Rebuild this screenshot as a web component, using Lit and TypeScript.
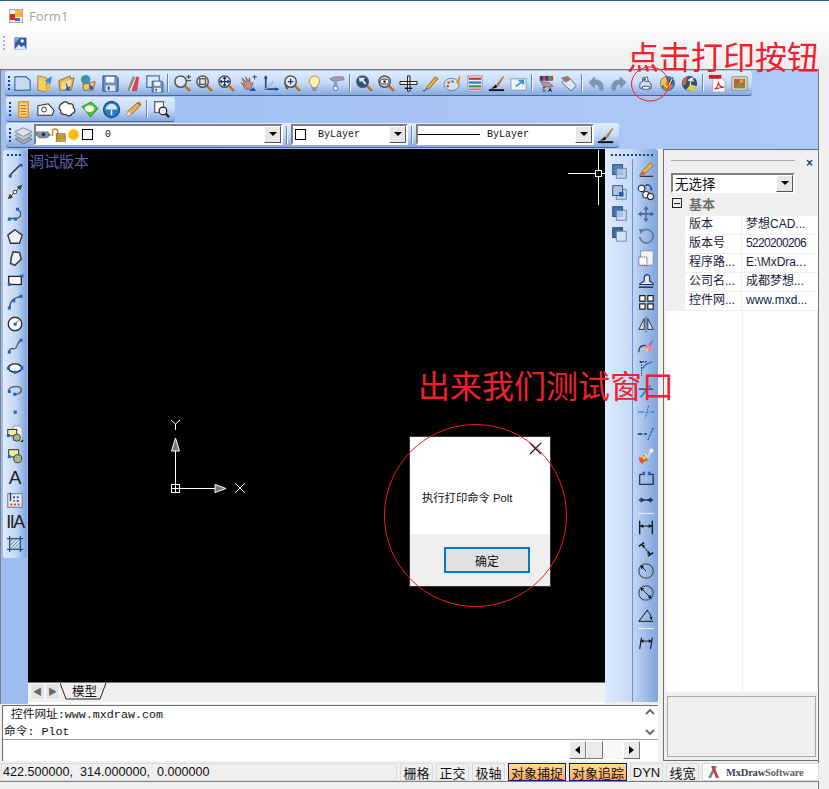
import { LitElement, html, css, svg, SVGTemplateResult } from "lit";
import { customElement } from "lit/decorators.js";

const B = "#1e66c8";
const node = (x: number, y: number) => svg`<rect x=${x} y=${y} width="3.4" height="3.4" fill=${B}/>`;
const mag = (inner: SVGTemplateResult | string = "", fill = "#dfe8f2") => svg`
  <path d="M12.5 12.5L18 18" stroke="#b8741c" stroke-width="2.6"/>
  <circle cx="8" cy="8" r="6" fill=${fill} stroke="#555" stroke-width="1.6"/>${inner}`;
const floppy = (x = 0, y = 0, s = 1) => svg`<g transform="translate(${x} ${y}) scale(${s})">
  <path d="M2 2h14l2 2v14H2z" fill="#6d8fbd" stroke="#2c4f80"/><rect x="5" y="3" width="9" height="6" fill="#f2f5f9"/>
  <rect x="5" y="12" width="10" height="6" fill="#dfe6f0"/><rect x="7" y="13" width="2" height="4" fill="#2c4f80"/></g>`;
const stack = (a: string, b: string) => svg`<rect x="3" y="3" width="11" height="11" fill=${a} stroke="#26456f"/>
  <rect x="7" y="7" width="11" height="11" fill=${b} stroke="#5a7ba8"/>`;

const I: Record<string, SVGTemplateResult> = {
  image: svg`<rect x="3" y="3" width="14" height="14" fill="#2f55a8"/><path d="M3 17l5-6 3 3 3-2 3 5z" fill="#dfe8fa"/><circle cx="12" cy="7" r="2" fill="#fff"/><path d="M3 3h7L3 10z" fill="#7fa3df"/>`,
  new: svg`<path d="M2 3h12l4 4v10H2z" fill="#dfeaf7" stroke="#2a5f96" stroke-width="1.2"/><path d="M3 4h10l4 4v8H3z" fill="#c6dbf2"/>`,
  folderArrow: svg`<path d="M3 2l9 2v15l-9-2z" fill="#f3cf68" stroke="#a97f22"/><path d="M12 4l4 1v11l-4 3z" fill="#e9b94a"/><path d="M18 2l-8 5 3 1-2 4 3-3 2 2z" fill="#3a8ed8"/>`,
  open: svg`<path d="M2 7l12-5v3l4-1-3 13H3z" fill="#e6bb58" stroke="#8d6b23"/><path d="M5 9l10-3-2 10H4z" fill="#f7dc8f"/><path d="M9 8l3 6 2-1-1 5-5-2 2-1z" fill="#1d5fb8"/>`,
  globeFolder: svg`<circle cx="7" cy="6" r="5" fill="#3f8fc8"/><path d="M4 3l4 1-2 4-3-1z" fill="#3ca34a"/><path d="M4 11l13-3-2 9H5z" fill="#ecc96f" stroke="#8d6b23"/><path d="M10 9l3 4 2-1-1 5-4-2 1-1z" fill="#1d5fb8"/>`,
  save: floppy(0, 0),
  cad: svg`<path d="M3 18L9 3h7v15z" fill="#d9dde6"/><path d="M4 18L10 3h3L7 18z" fill="#8b8f99"/><path d="M9 18l5-15h3l-2 15z" fill="#cf4b4b"/>`,
  saveAll: svg`<rect x="2" y="2" width="13" height="12" fill="#dfe8f4" stroke="#2c4f80"/>${floppy(6, 6, 0.72)}`,
  zoomPM: mag(svg`<path d="M14 3h5M16.5 .8v4.4M14 7h5" stroke="#333" stroke-width="1"/>`),
  zoomWin: mag(svg`<rect x="5" y="5" width="6" height="6" fill="none" stroke="#555" stroke-width="1.4"/>`),
  zoomPan: mag(svg`<path d="M8 3.5v9M3.5 8h9M6.5 5L8 3.5 9.5 5M6.5 11L8 12.5 9.5 11M5 6.5L3.5 8 5 9.5M11 6.5L12.5 8 11 9.5" stroke="#16325f" fill="none" stroke-width="1.2"/>`),
  hand: svg`<path d="M3 4l5 5-1-6 3 5 1-4 1 6 3-1-3 7H7L2 9l4 3z" fill="#c08f8a" stroke="#7e5a58" stroke-width=".8"/><path d="M14 3h5M16.5 .8v5" stroke="#1f4f90"/><path d="M11 18l4-4 3 4z" fill="#1f4f90"/>`,
  axes: svg`<path d="M5 2v14h13" fill="none" stroke="#1e4d8c" stroke-width="1.8"/><path d="M5 16l8-8" stroke="#9fb2cc" stroke-width="1.6"/><path d="M3 5l2-4 2 4zM15 14l4 2-4 2z" fill="#1e4d8c"/>`,
  zoomRot: svg`<path d="M5 4a8 8 0 0 0 0 12" fill="none" stroke="#456" stroke-width="1.6"/>${mag(svg`<path d="M8 5v6M5 8h6" stroke="#16325f" stroke-width="1.3"/>`, "#e8eef6")}`,
  bulb: svg`<path d="M10 2a5.5 5.5 0 0 1 3 10v2H7v-2a5.5 5.5 0 0 1 3-10z" fill="#fbf2a8" stroke="#a3945f"/><rect x="7.5" y="14" width="5" height="4" fill="#8a97a8"/>`,
  tool: svg`<path d="M3 5l5-2h9l1 3-7 1H5z" fill="#ba9aa0" stroke="#6d7b92" stroke-width=".8"/><rect x="7" y="7" width="4" height="6" fill="#8fa6c2"/><circle cx="9" cy="15" r="2.4" fill="#e9eef5" stroke="#5c6f8a"/>`,
  zoomDark: mag(svg`<path d="M4 4h7l-2 2 3 4-2 1-3-4-2 2z" fill="#dfe8f2"/>`, "#1f4f90"),
  zoomEye: mag(svg`<ellipse cx="8" cy="8" rx="4.5" ry="2.6" fill="#fff" stroke="#333"/><circle cx="8" cy="8" r="1.5" fill="#333"/>`, "#cfd3da"),
  plane: svg`<path d="M1 8h18v3H1zM9 2h2.500v16H9z" fill="#fff" stroke="#111"/><path d="M6 15h8" stroke="#111" stroke-width="1.4"/>`,
  penCurve: svg`<path d="M2 17c1 2 3 0 4-2" fill="none" stroke="#222"/><path d="M6 14l9-11 3 2-10 11z" fill="#efb13a" stroke="#8d6418"/><path d="M6 18h12" stroke="#a8b0ba"/>`,
  palette: svg`<ellipse cx="9" cy="11" rx="8" ry="6.5" fill="#d7dee8" stroke="#6e7f96"/><circle cx="6" cy="9" r="1.3" fill="#d04a3a"/><circle cx="10" cy="8" r="1.3" fill="#3a9a4c"/><circle cx="5" cy="13" r="1.3" fill="#3b6fc6"/><path d="M14 9l3-7 1.5 1-2 8z" fill="#e28a2b"/>`,
  colorBars: svg`<rect x="3" y="2" width="15" height="16" fill="#eef2f7" stroke="#8a97a8"/><path d="M4 5h13" stroke="#d6342f" stroke-width="2.4"/><path d="M4 9h13" stroke="#2f7fd6" stroke-width="2.4"/><path d="M4 13h13" stroke="#2fa14a" stroke-width="2.4"/><path d="M4 16h13" stroke="#d64f9a" stroke-width="1.5"/>`,
  brush: svg`<path d="M2 17h16" stroke="#111" stroke-width="2"/><path d="M4 15c3-1 4-3 5-4l2 2c-1 2-4 3-7 2z" fill="#111"/><path d="M10 11l7-9 1 1-6 10z" fill="#b5763a"/>`,
  arrowBox: svg`<rect x="2" y="5" width="16" height="12" fill="#eef3f9" stroke="#8b98aa"/><path d="M7 13l7-5M10 7h5v4" fill="none" stroke="#2f8fd8" stroke-width="1.8"/>`,
  colors: svg`<path d="M3 2h14v5H3z" fill="#d33"/><path d="M3 2h3v5H3zM9 2h3v5H9z" fill="#33a"/><path d="M12 2h3v5h-3z" fill="#3a3"/><path d="M4 8l9 1 4 4-5 1-6-2z" fill="#b9928a" stroke="#6c5a5a" stroke-width=".7"/><path d="M14 14l2 5h-1l-.4-1h-2l-.4 1h-1z" fill="#333"/><path d="M6 14h3M6 16h2M6 18h3" stroke="#333"/>`,
  tag: svg`<path d="M3 9l6-6 2 1 7 8-5 6-8-7z" fill="#dce5f0" stroke="#52688a"/><path d="M2 4l7-2 3 4-5 3z" fill="#96766f"/>`,
  undo: svg`<path d="M8 3L2 9l6 6v-4c3 0 5 1 5 6h4C18 9 14 6 8 6z" fill="#7f95b8" stroke="#7388ab" stroke-width=".5"/>`,
  redo: svg`<path d="M12 3l6 6-6 6v-4c-3 0-5 1-5 6H3C2 9 6 6 12 6z" fill="#7f95b8" stroke="#7388ab" stroke-width=".5"/>`,
  print: svg`<path d="M7 4l5-1 1 5H7z" fill="#fff" stroke="#455b7f"/><path d="M4 10l4-3 6 1 2 3v4H4z" fill="#d4dcea" stroke="#455b7f"/><path d="M7 13h7v3H7z" fill="#fff" stroke="#455b7f"/><circle cx="9" cy="5.500" r="1.300" fill="#455b7f"/>`,
  orb1: svg`<circle cx="10" cy="10" r="8" fill="#3d76b6"/><path d="M3 13a8 8 0 0 1 5-10l2 6z" fill="#e6c84a"/><path d="M5 16l4-8 7 5-5 4z" fill="#d97a3a"/><path d="M10 9l6-6-1 7z" fill="#14345f"/><path d="M6 11l4 3 5-9" fill="none" stroke="#f4e35a" stroke-width="1.4"/>`,
  orb2: svg`<circle cx="10" cy="10" r="8" fill="#284f8e"/><path d="M3 12a8 8 0 0 1 5-10l-2 9z" fill="#d9643a"/><path d="M6 17l5-6 7 2-4 5z" fill="#e6c84a"/><path d="M8 7c2-3 5-4 8-3l-3 1 2 3z" fill="#e9f0fa"/><path d="M11 5v8" stroke="#f4e35a" stroke-width="1.4"/>`,
  pdf: svg`<path d="M5 4h9l4 4v11H5z" fill="#fff" stroke="#a9a9a9"/><rect x="1" y="1" width="13" height="4" fill="#c8201c"/><path d="M7 16c3-2 4-5 4-8 0 4 2 6 6 6-4 0-7 1-10 2z" fill="none" stroke="#d62a24" stroke-width="1.2"/>`,
  picture: svg`<rect x="2" y="3" width="16" height="14" fill="#e9e3d6" stroke="#8a8a7a"/><rect x="4" y="5" width="12" height="10" fill="#b5683a"/><path d="M4 15l6-6 6 6z" fill="#79914c"/><circle cx="12" cy="7.5" r="2" fill="#f0a23a"/>`,
  list: svg`<rect x="5" y="2" width="10" height="16" fill="#fbd98a" stroke="#e08a12" stroke-width="1.4"/><path d="M7 6h6M7 9h6M7 12h6M7 15h6" stroke="#b5640c"/>`,
  polyPage: svg`<path d="M2 6l11-2 6 7-2 5H2z" fill="#fafbfc" stroke="#333" stroke-width="1.1"/><circle cx="8.5" cy="10" r="2.6" fill="none" stroke="#333"/>`,
  cloud: svg`<path d="M5 3c2-2 5-1 6 1 3-1 6 1 5 4 3 2 2 6-1 6-1 3-5 4-7 1-3 1-6-1-5-4-3-2-2-6 2-8z" fill="#fff" stroke="#333" stroke-width="1.3"/>`,
  bubble: svg`<path d="M2 7l10-5 7 7-8 9-2-3z" fill="#4fbf3f" stroke="#2d8a25"/><ellipse cx="10" cy="9" rx="5" ry="3.6" fill="#f2fbe8"/>`,
  dome: svg`<circle cx="10" cy="10" r="8.5" fill="#2d7bbd" stroke="#164f80" stroke-width="1.2"/><path d="M4 10a6 6 0 0 1 12 0z" fill="#cfe6f5"/><path d="M10 10v6" stroke="#e9f3fb" stroke-width="1.6"/>`,
  pencil: svg`<path d="M3 17l1-5 10-9 3 3-9 9z" fill="#e9b24b" stroke="#7f6a40"/><path d="M3 17l1-5 4 3z" fill="#f7e2bd"/><path d="M14 3l3 3 1.5-1.5-3-3z" fill="#c55c3f"/>`,
  zoomRect: svg`<path d="M3 14V2h10" fill="none" stroke="#555" stroke-width="1.2"/><rect x="3" y="2" width="9" height="11" fill="#fff" stroke="#555"/><path d="M14 14l4 4" stroke="#222" stroke-width="2.4"/><circle cx="11.5" cy="11.5" r="4" fill="#e8eef6" stroke="#222" stroke-width="1.3"/>`,
  layers: svg`<path d="M10 10l9 4-9 5-9-5z" fill="#9faab8" stroke="#717b88"/><path d="M10 6l9 4-9 5-9-5z" fill="#c0c8d3" stroke="#808a98"/><path d="M10 2l9 4-9 5-9-5z" fill="#dde2e9" stroke="#808a98"/>`,
  eye: svg`<path d="M0 6h16l4 5-6 4H4L0 11z" fill="#6a7f92"/><ellipse cx="9" cy="10" rx="7" ry="3.6" fill="#8a9cac"/><circle cx="10" cy="10" r="2.6" fill="#253a4e"/>`,
  lock: svg`<path d="M2 12V6a3.5 3.5 0 0 1 7 0v3" fill="none" stroke="#c28a26" stroke-width="2"/><rect x="7" y="9" width="12" height="10" fill="#dba93c" stroke="#8d6418"/><path d="M7 12h12M7 15h12" stroke="#9a7220"/>`,
  sun: svg`<circle cx="10" cy="10" r="7" fill="#fbb80c" stroke="#fbe05a" stroke-width="2" stroke-dasharray="2 1"/>`,
  line: svg`${node(15, 3)}${node(3, 15)}<path d="M5 15L15 5" stroke="#222" stroke-width="1.4"/>`,
  dim: svg`<path d="M4 16L16 4" stroke="#333" stroke-width="1.1"/><path d="M2 18l2-6 4 4zM18 2l-6 2 4 4z" fill="#444"/><circle cx="10" cy="10" r="2" fill="#fff" stroke="#333"/>`,
  polyArc: svg`<path d="M3 15h8c6 0 7-8 2-10" fill="none" stroke="#555" stroke-width="1.4"/>${node(2, 14)}${node(9, 14)}${node(11, 3)}`,
  pentagon: svg`<path d="M10 3l8 6-3 9H5L2 9z" fill="#f0f4f9" stroke="#333" stroke-width="1.5"/>`,
  poly: svg`<path d="M8 3l7 1 2 7-7 7-5-2 1-7z" fill="#f0f4f9" stroke="#444" stroke-width="1.8"/>`,
  rect: svg`<rect x="3" y="6" width="14" height="9" fill="#fff" stroke="#222" stroke-width="1.4"/>${node(2, 13)}${node(16, 4)}`,
  arc: svg`<path d="M4 17C4 9 9 5 16 4" fill="none" stroke="#555" stroke-width="1.6"/>${node(2, 15)}${node(15, 2)}${node(7, 7)}`,
  circle: svg`<circle cx="10" cy="10" r="7.5" fill="#fff" stroke="#333" stroke-width="1.5"/><path d="M10 10l4-4" stroke="#1e66c8"/>${node(8.5, 8.5)}`,
  spline: svg`<path d="M3 16c3-7 5 0 8-4s2-8 6-8" fill="none" stroke="#555" stroke-width="1.5"/>${node(2, 15)}${node(15, 2)}`,
  ellipse: svg`<ellipse cx="10" cy="10" rx="7.5" ry="4.5" fill="#fff" stroke="#222" stroke-width="1.4"/>${node(1, 8.5)}${node(16, 8.5)}${node(8.5, 13)}`,
  ellArc: svg`<path d="M3 12C1 6 15 4 17 9c1 4-4 6-8 6" fill="none" stroke="#666" stroke-width="1.6"/>${node(2, 10)}${node(8, 13)}`,
  point: svg`<rect x="8.5" y="8.5" width="3.500" height="3.500" fill=${B}/>`,
  insert: svg`<path d="M8 1h7l3 3v13H8z" fill="#eef2f7" stroke="#8a97a8"/><rect x="2" y="5" width="10" height="7" fill="#f0ee9a" stroke="#222"/><circle cx="12" cy="14" r="4" fill="#a5b68b" stroke="#333"/>${node(1, 10)}<path d="M16 19l3-3v3z" fill="#111"/>`,
  block: svg`<rect x="3" y="3" width="11" height="8" fill="#f0ee9a" stroke="#222"/><circle cx="13" cy="13" r="4.5" fill="#a5b68b" stroke="#333"/>${node(2, 9)}`,
  hatchTbl: svg`<rect x="2" y="3" width="16" height="15" fill="#e4e8ee" stroke="#5a7290"/><rect x="8" y="6" width="2" height="2" fill="#1f3a8a"/><rect x="12" y="6" width="2" height="2" fill="#1f3a8a"/><rect x="8" y="10" width="2" height="2" fill="#2fa14a"/><rect x="12" y="10" width="2" height="2" fill="#1f3a8a"/><rect x="5" y="14" width="2" height="2" fill="#d6342f"/><rect x="9" y="14" width="2" height="2" fill="#d6342f"/><rect x="13" y="14" width="2" height="2" fill="#d6342f"/><path d="M5 2v9" stroke="#333" stroke-width="1.5"/>`,
  hatch: svg`<rect x="4" y="4" width="12" height="12" fill="#cfe0f2"/><path d="M4 8l4-4M4 12l8-8M4 16L16 4M8 16l8-8M12 16l4-4" stroke="#4a5a70" stroke-width=".8"/><path d="M1 4h18M1 16h18M4 1v18M16 1v18" stroke="#23568f" stroke-width="1.4"/>`,
  s1: stack("#5a84b8", "rgba(190,210,235,.75)"),
  s2: svg`<rect x="7" y="7" width="11" height="11" fill="#c8d9ee" stroke="#5a7ba8"/><rect x="3" y="3" width="11" height="11" fill="#a9c4e4" stroke="#26456f"/><rect x="10" y="10" width="5" height="5" fill="#2f5b96"/>`,
  s3: stack("#4a74a8", "rgba(205,222,242,.75)"),
  s4: svg`<rect x="3" y="3" width="11" height="11" fill="#3f6ba3" stroke="#26456f"/><rect x="7" y="7" width="11" height="11" fill="#d2e1f3" stroke="#6a8ab4"/>`,
  eraser: svg`<path d="M3 17h15" stroke="#222" stroke-width="1.2"/><path d="M3 16l3-5 9-9 3 3-9 9z" fill="#e9b24b" stroke="#7f6a40"/><path d="M3 16l3-5 4 3z" fill="#d85a4a"/>`,
  copy: svg`<circle cx="5" cy="6" r="3.6" fill="#fff" stroke="#333" stroke-width="1.3"/><circle cx="10" cy="13" r="3.6" fill="#fff" stroke="#333" stroke-width="1.3"/><circle cx="15" cy="15" r="3.4" fill="#fff" stroke="#333" stroke-width="1.3"/><path d="M9 3c3-2 6-1 7 3" fill="none" stroke="#1e4d8c" stroke-width="1.5"/><path d="M14 6h4l-2 3z" fill="#1e4d8c"/>`,
  move: svg`<path d="M10 2v16M2 10h16" stroke="#4f76a8" stroke-width="2"/><path d="M7 5l3-4 3 4zM7 15l3 4 3-4zM5 7l-4 3 4 3zM15 7l4 3-4 3z" fill="#426a9e"/>`,
  rotate: svg`<path d="M5 5a7.5 7.5 0 1 1-2 6" fill="none" stroke="#5f7ea6" stroke-width="2"/><path d="M2 2l6 1-4 5z" fill="#5f7ea6"/>`,
  dotRect: svg`<rect x="4" y="2" width="14" height="16" fill="#eef3f9" stroke="#7b90ab"/><rect x="2" y="9" width="9" height="9" fill="#fff" stroke="#222" stroke-dasharray="1 1"/>`,
  stamp: svg`<path d="M3 15c0-3 4-2 5-4 0-3-1-6 3-7 4 0 3 4 3 7 1 2 4 1 4 4z" fill="#dfe8f4" stroke="#1a3350" stroke-width="1.3"/><path d="M2 18h16" stroke="#1a3350" stroke-width="1.6"/>`,
  array: svg`<path d="M3 3h6v6H3zM12 3h6v6h-6zM3 12h6v6H3zM12 12h6v6h-6z" fill="#fff" stroke="#222" stroke-width="1.3"/>`,
  mirror: svg`<path d="M10 1v18" stroke="#1e66c8"/><path d="M8 4v12H2zM12 4v12h6z" fill="#d9e1ec" stroke="#222"/>`,
  paint: svg`<path d="M2 17c0-8 6-9 10-6" fill="none" stroke="#333" stroke-width="1.3"/><circle cx="13" cy="12" r="4" fill="#e77fc0"/><circle cx="11" cy="14" r="2" fill="#f0d24a"/><path d="M13 8l4-5 1 1-3 6z" fill="#8a6ab0"/>`,
  trim: svg`<path d="M3 3h9" stroke="#111" stroke-dasharray="1.5 1.5" stroke-width="1.5"/><path d="M5 3v16" stroke="#111" stroke-dasharray="1.5 1.5"/><path d="M5 11l5-5 7-3" fill="none" stroke="#1e7bd8" stroke-width="1.6"/>`,
  extend: svg`<path d="M2 9h16" stroke="#111" stroke-width="1.1"/><path d="M4 18l5-6 6-7" fill="none" stroke="#1e7bd8" stroke-width="1.8"/>`,
  brk1: svg`<path d="M1 10h7M11 10h2M15 10h4" stroke="#1e66c8" stroke-width="1.3"/><path d="M13 3l-4 14" stroke="#1e66c8" stroke-dasharray="2 1.5" stroke-width="1.3"/>`,
  brk2: svg`<path d="M1 10h5M8 10h3" stroke="#1a3350" stroke-width="1.5"/><path d="M18 3l-6 14" stroke="#1e66c8" stroke-dasharray="3 1" stroke-width="1.4"/>`,
  explode: svg`<path d="M3 14l5-6 4 3 5-8" stroke="#c9d5e3" stroke-width="2.5" fill="none"/><path d="M2 11l4 1 1-4 3 3 2 4-4 1-2 3-3-3z" fill="#e25224"/><circle cx="8" cy="12" r="2" fill="#f5d03a"/><rect x="14" y="2" width="4" height="4" fill="#eef1f5"/>`,
  bracket: svg`<path d="M3 6v11h15V6h-5M8 6H3" fill="none" stroke="#28344a" stroke-width="1.4"/><rect x="6" y="3" width="3" height="4" fill="#1e66c8"/><rect x="12" y="3" width="3" height="4" fill="#1e66c8"/>`,
  join: svg`<path d="M2 10h16" stroke="#1a3350" stroke-width="1.5"/><path d="M4 7l5 3-5 3zM16 7l-5 3 5 3z" fill="#17365f"/>`,
  dimLin: svg`<path d="M3 3v15M17 3v15" stroke="#111" stroke-width="1.4"/><path d="M3 9h14" stroke="#111"/><path d="M3 9l4-2v4zM17 9l-4-2v4z" fill="#111"/>`,
  dimAli: svg`<path d="M2 7l6-4M12 18l6-4" stroke="#111" stroke-width="1.6"/><path d="M5 5l10 11" stroke="#111"/><path d="M5 5l4 1-2 3zM15 16l-4-1 2-3z" fill="#111"/>`,
  radius: svg`<circle cx="10" cy="10" r="8" fill="none" stroke="#555" stroke-width="1.4"/><path d="M10 10L4 4" stroke="#111"/><path d="M4 4l4 1-3 3z" fill="#111"/>`,
  diam: svg`<circle cx="10" cy="10" r="8" fill="none" stroke="#555" stroke-width="1.4"/><path d="M4 4l12 12" stroke="#111"/><path d="M4 4l4 1-3 3zM16 16l-4-1 3-3z" fill="#111"/>`,
  angle: svg`<path d="M2 17h16M2 17L12 4" stroke="#111" stroke-width="1.1"/><path d="M11 5c3 2 5 6 5 10" fill="none" stroke="#111"/><path d="M16 16l-2-4 3 .5z" fill="#111"/>`,
  dimCont: svg`<path d="M5 5L3 18M17 5l-2 13" stroke="#111" stroke-width="1.2"/><path d="M4 9h12" stroke="#111"/><path d="M4 9l3-2v4zM16 9l-3-2v4z" fill="#111"/>`,
};

const icon = (n: string) => html`<svg class="ic" viewBox="0 0 20 20" aria-hidden="true">${I[n]}</svg>`;
const cell = (n: string) => (n === "|" ? html`<span class="sep"></span>` : html`<span class="cell">${icon(n)}</span>`);

const ROW1 = ["new", "folderArrow", "open", "globeFolder", "save", "cad", "saveAll", "|", "zoomPM", "zoomWin", "zoomPan", "hand", "axes", "zoomRot", "bulb", "tool", "|", "zoomDark", "zoomEye", "plane", "penCurve", "palette", "colorBars", "brush", "arrowBox", "|", "colors", "tag", "|", "undo", "redo", "|x", "print", "orb1", "orb2", "|", "pdf", "picture"];
const ROW2 = ["list", "polyPage", "cloud", "bubble", "dome", "pencil", "|", "zoomRect"];
const LEFT = ["line", "dim", "polyArc", "pentagon", "poly", "rect", "arc", "circle", "spline", "ellipse", "ellArc", "point", "insert", "block", "A", "hatchTbl", "IA", "hatch"];
const COL1 = ["s1", "s2", "s3", "s4"];
const COL2 = ["eraser", "copy", "move", "rotate", "dotRect", "stamp", "array", "mirror", "paint", "trim", "extend", "brk1", "brk2", "explode", "bracket", "join", "-", "dimLin", "dimAli", "radius", "diam", "angle", "-", "dimCont"];
const PROPS: [string, string][] = [["版本", "梦想CAD..."], ["版本号", "5220200206"], ["程序路...", "E:\\MxDra..."], ["公司名...", "成都梦想..."], ["控件网...", "www.mxd..."]];

@customElement("app-root")
export class AppRoot extends LitElement {
  static styles = css`
    :host { display: block; position: relative; width: 829px; height: 789px; overflow: hidden; background: #f0f0f0;
      font-family: "Liberation Sans", "Noto Sans CJK SC", sans-serif; font-size: 12px; color: #111; }
    .ic { width: 20px; height: 20px; display: block; }
    .title { height: 30px; border-top: 1px solid #2f5f7f; background: #fff; display: flex; align-items: center; gap: 6px; padding-left: 9px; color: #a2a2a2; font-size: 13px; font-family: "Open Sans", sans-serif; }
    .title svg { width: 14px; height: 14px; }
    .strip { height: 38px; box-sizing: border-box; padding: 4px 0 0 3px; background: linear-gradient(#fbfbfb, #ededed); display: flex; gap: 7px; align-items: flex-start; }
    .strip .ic { width: 17px; height: 17px; }
    .grip { width: 2px; height: 14px; margin-top: 1px; background: repeating-linear-gradient(#b4b4b4 0 2px, transparent 2px 4px); }
    .frame { width: 819px; height: 720px; box-sizing: border-box; border-top: 1px solid #767676; border-right: 1px solid #767676; display: flex; flex-direction: column; }
    .tbarea { height: 79px; background: linear-gradient(90deg, #9fbef1, #aecaf6); box-sizing: border-box; padding: 1px 0 0 4px; border-left: 1px solid #808080; display: flex; flex-direction: column; gap: 1px; }
    .bar { display: flex; align-items: center; height: 25px; box-sizing: border-box; align-self: flex-start; border-radius: 3px; border-bottom: 1px solid #46679a; padding-left: 2px;
      background: linear-gradient(#e0ecfc, #c6daf7 50%, #86a9df); }
    .bar.r1 { width: 747px; }
    .bar.r2 { width: 169px; margin-left: 1px; padding-left: 2px; }
    .bar.r3 { width: 613px; margin-left: 1px; }
    .dots { width: 2px; height: 14px; margin: 0 1px; flex: none; background: repeating-linear-gradient(#1f3f78 0 2px, transparent 2px 4px); }
    .cell { width: 22px; height: 22px; display: flex; align-items: center; justify-content: center; flex: none; }
    .cell .ic { width: 19px; height: 19px; }
    .sep { width: 1px; height: 18px; margin: 0 2px; background: #5f83bb; border-right: 1px solid #f0f6ff; flex: none; }
    .sep.wide { margin: 0 3px; }
    .gapx { width: 5px; flex: none; }
    .gap1 { width: 1px; flex: none; }
    .combo { height: 21px; background: #fff; box-sizing: border-box; border: 2px solid; border-color: #808080 #fff #fff #808080; display: flex; align-items: center; font-family: "Liberation Mono", monospace; font-size: 10px; flex: none; position: relative; margin-bottom: 2px; }
    .combo.layer { width: 249px; }
    .combo.color { width: 117px; }
    .combo.ltype { width: 178px; }
    .combo .ic { width: 15px; height: 15px; flex: none; }
    .combo .fill { flex: 1; min-width: 0; }
    .drop { width: 17px; height: 17px; flex: none; background: #e6e6e6; border: 1px solid; border-color: #fff #555 #555 #fff; box-sizing: border-box; display: flex; align-items: center; justify-content: center; }
    .drop i { border: 4px solid transparent; border-top: 4px solid #000; border-bottom: 0; }
    .swatch { width: 9px; height: 9px; border: 1px solid #000; flex: none; margin-left: 1px; }
    .lname { margin-left: 12px; }
    .lrule { width: 62px; border-top: 1px solid #000; margin: 0 7px 0 0; flex: none; }
    .lrule + .lname { margin-left: 0; }
    .body { display: flex; height: 612px; }
    .mainc { width: 663px; display: flex; flex-direction: column; flex: none; }
    .work { height: 555px; display: flex; flex: none; }
    .leftcol { width: 28px; background: #9dbdf1; box-sizing: border-box; padding-left: 2px; border-left: 1px solid #808080; flex: none; }
    .vbar { width: 24px; height: 408px; margin-top: 1px; border-radius: 3px; background: linear-gradient(90deg, #dfeafb, #c2d7f5 55%, #80a4dc); display: flex; flex-direction: column; align-items: center; }
    .vdots { width: 16px; height: 2px; margin: 4px 0 3px; background: repeating-linear-gradient(90deg, #1f3f78 0 2px, transparent 2px 4px); flex: none; }
    .vcell { width: 22px; height: 22px; display: flex; align-items: center; justify-content: center; font-size: 19px; color: #222; flex: none; white-space: nowrap; }
    .vcell.ia { font-size: 18px; letter-spacing: -1.5px; }
    .vcell .ic { width: 18px; height: 18px; }
    .canvasc { width: 577px; flex: none; display: flex; flex-direction: column; }
    .canvas { height: 534px; background: #000; color: #5b60ac; font: 15px "Noto Sans CJK SC", sans-serif; padding: 2px 0 0 1px; box-sizing: border-box; border-bottom: 1px solid #777; line-height: 20px; }
    .tabs { flex: 1; background: #efefef; border-bottom: 2px solid #fff; display: flex; align-items: flex-start; padding-left: 2px; }
    .nav { width: 13px; height: 15px; display: flex; align-items: center; justify-content: center; background: #e4e4e4; border: 1px solid #f7f7f7; color: #666; font-size: 9px; }
    .tab { display: flex; align-items: center; }
    .tab svg { width: 47px; height: 17px; margin-right: -47px; flex: none; }
    .tab span { margin-left: 12px; font-size: 12.5px; width: 38px; line-height: 16px; }
    .rtb { width: 53px; border-radius: 0 3px 3px 0; background: linear-gradient(90deg, #deeafc, #c6daf7 50%, #7ea2da); flex: none; display: flex; flex-direction: column; position: relative; box-sizing: border-box; border-bottom: 2px solid #eee; }
    .rtb .vdots { width: 42px; margin: 5px 0 3px 6px; }
    .cols { display: flex; }
    .col1 { width: 28px; display: flex; flex-direction: column; align-items: center; padding-top: 1px; box-sizing: border-box; border-right: 1px solid #6f93c8; height: 543px; }
    .col2 { width: 25px; display: flex; flex-direction: column; align-items: center; }
    .col2 .hs { width: 16px; height: 1px; background: #e9f1fd; margin: 2px 0; flex: none; }
    .col1 .vcell { height: 21px; }
    .cmd { flex: 1; margin: 1px 0 0 2px; width: 656px; background: #fff; box-sizing: border-box; border: 1px solid #6e6e6e; border-width: 1px 0 0 1px; display: flex; flex-direction: column; }
    .cmdtop { height: 33px; display: flex; border-bottom: 1px solid #a0a0a0; flex: none; }
    .cmdtext { flex: 1; font: 11.7px/16.5px "Liberation Mono", "Noto Sans CJK SC", monospace; padding: 1px 0 0 1px; white-space: pre; box-sizing: border-box; overflow: hidden; }
    .vs { width: 17px; display: flex; flex-direction: column; justify-content: space-between; align-items: center; padding: 2px 0 3px; background: #fff; }
    .chev { fill: none; stroke: #666; stroke-width: 1.8; width: 10px; height: 8px; }
    .hsb { display: flex; justify-content: flex-end; padding: 1px 18px 0 0; }
    .sb { height: 18px; width: 17px; box-sizing: border-box; background: #eaeaea; border: 1px solid; border-color: #fff #777 #777 #fff; display: flex; align-items: center; justify-content: center; }
    .track { width: 20px; height: 18px; background: repeating-conic-gradient(#f0f0f0 0 25%, #fff 0 50%) 0 0 / 2px 2px; }
    .tl { border: 4px solid transparent; border-right: 5px solid #000; border-left: 0; }
    .tr { border: 4px solid transparent; border-left: 5px solid #000; border-right: 0; }
    .panel { flex: 1; box-sizing: border-box; border: 1px solid #6e6e6e; border-width: 1px 0 1px 1px; background: #efefef; display: flex; flex-direction: column; }
    .phead { display: flex; align-items: center; height: 23px; padding: 0 0 0 7px; flex: none; }
    .phead i { width: 124px; border-top: 1px solid #a8a8a8; margin-top: -2px; }
    .phead b { margin: 3px 0 0 11px; color: #1f4778; font-size: 12px; font-weight: bold; }
    .combo.sel { width: 124px; margin: 0 0 0 7px; height: 20px; font: 13.5px "Noto Sans CJK SC", sans-serif; padding-left: 2px; }
    .group { display: flex; align-items: center; height: 23px; box-sizing: border-box; padding: 0 0 3px 8px; flex: none; color: #6e6e6e; font-weight: bold; font-size: 13px; }
    .box { width: 8px; height: 8px; border: 1px solid #222; margin-right: 7px; display: flex; align-items: center; justify-content: center; }
    .box::after { content: ""; width: 6px; border-top: 1px solid #222; }
    .grid { display: flex; flex-direction: column; gap: 1px; padding-left: 21px; flex: none; }
    .prow { display: grid; grid-template-columns: 56px 1fr; gap: 1px; height: 18px; }
    .prow > div { background: #fff; line-height: 17px; padding-left: 4px; font-size: 12px; white-space: nowrap; overflow: hidden; color: #15243a; }
    .prow > div.num { letter-spacing: -.67px; }
    .prest { flex: 1; margin: 1px 1px 0 2px; background: linear-gradient(90deg, #fff 76px, #eee 76px 77px, #fff 77px); }
    .desc { height: 61px; margin: 4px 2px 3px 3px; box-sizing: border-box; border: 1px solid #a8a8a8; flex: none; }
    .status { display: flex; height: 21px; gap: 3px; box-sizing: border-box; border-bottom: 1px solid #808080; padding: 2px 0 0 1px; background: #efefef; flex: none; width: 818px; font-size: 13px; }
    .st { box-sizing: border-box; border: 1px solid #dadada; display: flex; align-items: center; justify-content: center; white-space: pre; overflow: hidden; flex: none; }
    .st.coord { width: 396px; justify-content: flex-start; font-size: 12.6px; padding-left: 1px; }
    .st.on { background: linear-gradient(#ffd9a0, #ffac50); border-color: #0b1f7a; }
    .w33 { width: 33px; }
    .w58 { width: 58px; }
    .logo { width: 117px; background: #fff; gap: 4px; justify-content: flex-start; padding-left: 3px; font: bold 10.5px "Liberation Serif", serif; color: #3a3f5c; letter-spacing: -.2px; }
    .logo svg { width: 16px; height: 16px; flex: none; }
    .logo em { font-style: normal; color: #666; }
    .overlay { position: absolute; pointer-events: none; }
    .redtxt { color: #f0202c; font: 32px/36px "Noto Sans CJK SC", sans-serif; white-space: nowrap; }
    .t1 { left: 627px; top: 37px; z-index: 3; }
    .t2 { left: 418px; top: 366px; z-index: 3; }
    .draw { left: 0; top: 0; width: 829px; height: 789px; z-index: 2; }
    .dlg { left: 409px; top: 436px; width: 142px; height: 151px; box-sizing: border-box; border: 1px solid #333; background: #fff; z-index: 1; display: flex; flex-direction: column; }
    .dlgtop { height: 97px; font-size: 11.3px; padding: 52px 0 0 12px; box-sizing: border-box; color: #111; }
    .dlgfoot { flex: 1; background: #efefef; padding: 13px 0 0 34px; }
    .ok { width: 86px; height: 26px; box-sizing: border-box; border: 2px solid #0078d7; background: #e1e1e1; display: flex; align-items: center; justify-content: center; font-size: 12px; }
  `;

  render() {
    const row1 = ROW1.map((n) => (n === "|x" ? html`<span class="gapx"></span>` : cell(n)));
    return html`
      <div class="title"><svg viewBox="0 0 14 14"><rect x=".5" y=".5" width="13" height="13" fill="#eee" stroke="#aaa"/><rect x="6" y="1" width="7" height="7" fill="#f4b83a"/><rect x="1" y="5" width="5" height="6" fill="#c8302a"/><rect x="6" y="9" width="5" height="3" fill="#3d74c8"/></svg>Form1</div>
      <div class="strip"><span class="grip"></span>${icon("image")}</div>
      <div class="frame">
        <div class="tbarea">
          <div class="bar r1"><span class="dots"></span>${row1}</div>
          <div class="bar r2"><span class="dots"></span>${ROW2.map(cell)}</div>
          <div class="bar r3"><span class="dots"></span><span class="cell">${icon("layers")}</span>
            <div class="combo layer">${icon("eye")}${icon("lock")}${icon("sun")}<span class="swatch"></span><span class="lname">0</span><span class="fill"></span><span class="drop"><i></i></span></div>
            <span class="sep wide"></span>
            <div class="combo color"><span class="gap1"></span><span class="swatch"></span><span class="lname">ByLayer</span><span class="fill"></span><span class="drop"><i></i></span></div>
            <span class="sep wide"></span>
            <div class="combo ltype"><span class="lrule"></span><span class="lname">ByLayer</span><span class="fill"></span><span class="drop"><i></i></span></div>
            <span class="cell">${icon("brush")}</span>
          </div>
        </div>
        <div class="body">
          <div class="mainc">
            <div class="work">
              <div class="leftcol"><div class="vbar"><span class="vdots"></span>${LEFT.map((n) =>
                n === "A" ? html`<span class="vcell">A</span>` : n === "IA" ? html`<span class="vcell ia">IIA</span>` : html`<span class="vcell">${icon(n)}</span>`)}</div></div>
              <div class="canvasc">
                <div class="canvas">调试版本</div>
                <div class="tabs">
                  <span class="nav">◀</span><span class="nav">▶</span>
                  <div class="tab"><svg viewBox="0 0 47 17"><path d="M0 0l6 16h34l6-16" fill="none" stroke="#222"/></svg><span>模型</span></div>
                </div>
              </div>
              <div class="rtb">
                <span class="vdots"></span>
                <div class="cols">
                  <div class="col1">${COL1.map((n) => html`<span class="vcell">${icon(n)}</span>`)}</div>
                  <div class="col2">${COL2.map((n) => n === "-" ? html`<span class="hs"></span>` : html`<span class="vcell">${icon(n)}</span>`)}</div>
                </div>
              </div>
            </div>
            <div class="cmd">
              <div class="cmdtop">
                <div class="cmdtext"> 控件网址:www.mxdraw.com
命令: Plot</div>
                <div class="vs">
                  <svg class="chev" viewBox="0 0 10 8"><path d="M1 6l4-4 4 4"/></svg>
                  <svg class="chev" viewBox="0 0 10 8"><path d="M1 2l4 4 4-4"/></svg>
                </div>
              </div>
              <div class="hsb">
                <span class="sb"><i class="tl"></i></span><span class="sb"></span><span class="track"></span><span class="sb"><i class="tr"></i></span>
              </div>
            </div>
          </div>
          <div class="panel">
            <div class="phead"><i></i><b>×</b></div>
            <div class="combo sel">无选择<span class="fill"></span><span class="drop"><i></i></span></div>
            <div class="group"><span class="box"></span>基本</div>
            <div class="grid">${PROPS.map(([k, v]) => html`<div class="prow"><div>${k}</div><div class=${/^\d+$/.test(v) ? "num" : ""}>${v}</div></div>`)}</div>
            <div class="prest"></div>
            <div class="desc"></div>
          </div>
        </div>
        <div class="status">
          <div class="st coord">422.500000,  314.000000,  0.000000</div>
          <div class="st w33">栅格</div><div class="st w33">正交</div><div class="st w33">极轴</div>
          <div class="st on w58">对象捕捉</div><div class="st on w58">对象追踪</div>
          <div class="st w33">DYN</div><div class="st w33">线宽</div>
          <div class="st logo"><svg viewBox="0 0 16 16"><path d="M2 14L8 2h3L5 14z" fill="#7384ad"/><path d="M5 2h3l5 12h-3z" fill="#d23a3a"/></svg><span>MxDraw<em>Software</em></span></div>
        </div>
      </div>

      <div class="overlay dlg">
        <div class="dlgtop">执行打印命令 Polt</div>
        <div class="dlgfoot"><div class="ok">确定</div></div>
      </div>
      <svg class="overlay draw" viewBox="0 0 829 789" fill="none">
        <g stroke="#fff" shape-rendering="crispEdges">
          <path d="M175.500 484V447M180 488.500h35"/>
          <rect x="171.500" y="484.500" width="8" height="8"/>
          <path d="M175.500 484v9M171 488.500h8"/>
          <path d="M598.500 150v21M598.500 176v29M568 173.500h28M601 173.500h4"/>
          <rect x="595.500" y="170.500" width="6" height="6"/>
        </g>
        <g stroke="#fff">
          <path d="M175.500 438l-4 13h8zM215 484.500l11 4-11 4z" fill="#777"/>
          <path d="M171 420l4.500 4 4.500-4M175.500 424v6M235 483l10 10M245 483l-10 10"/>
        </g>
        <path d="M530 443l11 11M541 443l-11 11" stroke="#111" stroke-width="1.1"/>
        <circle cx="475.500" cy="515.500" r="91" stroke="#f01c2c"/>
        <ellipse cx="650" cy="84" rx="18.500" ry="17" stroke="#f01c2c"/>
      </svg>
      <div class="overlay redtxt t1">点击打印按钮</div>
      <div class="overlay redtxt t2">出来我们测试窗口</div>
    `;
  }
}
